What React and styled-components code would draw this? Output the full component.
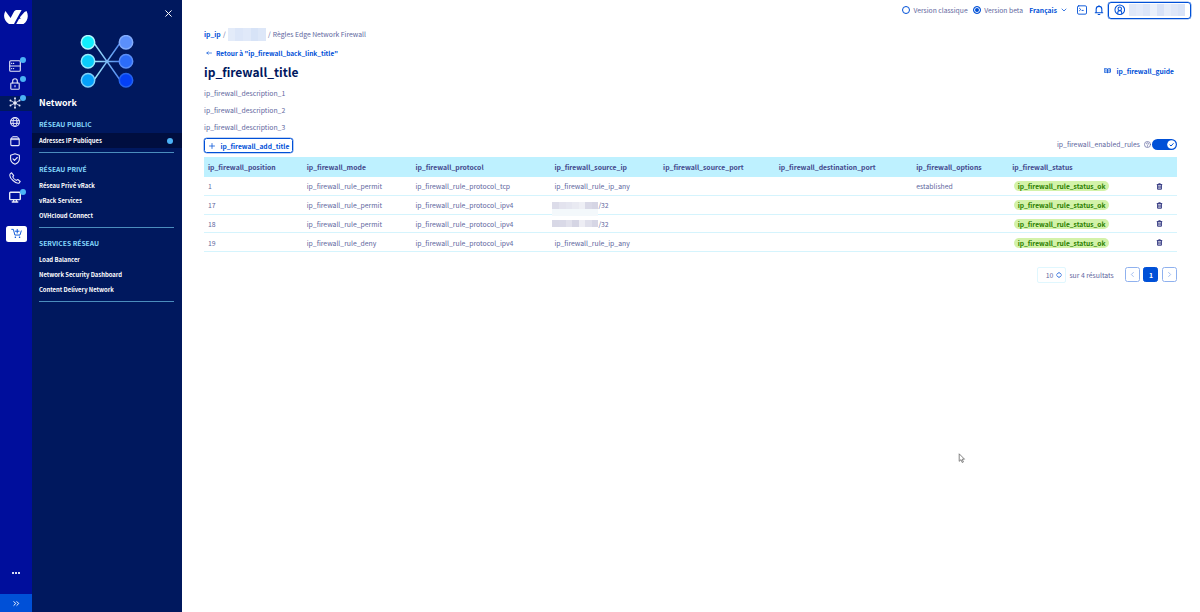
import React from 'react'
import styled, { createGlobalStyle } from 'styled-components'

const GlobalStyle = createGlobalStyle`
  * {
    box-sizing: border-box;
  }

  body {
    margin: 0;
    background: #fff;
    color: #5e669e;
    font-family: 'Noto Sans CJK JP', 'Noto Sans', sans-serif;
    font-size: 6.85px;
    line-height: 10px;
    overflow: hidden;
  }

  h1,
  h2,
  h3,
  p {
    margin: 0;
  }

  svg {
    display: block;
    flex: none;
  }
`

const Page = styled.div`
  display: flex;
  height: 612px;
  width: 1200px;
`

/* icon rail */
const Rail = styled.nav`
  display: flex;
  flex-direction: column;
  align-items: center;
  width: 32px;
  background: #000e9c;
`

const Logo = styled.div`
  height: 58px;
  padding-top: 9px;
`

const RailItem = styled.div`
  position: relative;
  display: flex;
  align-items: center;
  justify-content: center;
  width: 32px;
  height: 15px;
  margin-bottom: 3.8px;
  padding-right: 2px;
  color: #e8eaf8;
  background: ${(p) => (p.$active ? '#00185e' : 'transparent')};
`

const Badge = styled.span`
  position: absolute;
  top: -1px;
  left: 19.5px;
  width: 6px;
  height: 6px;
  border-radius: 50%;
  background: #4bb2f6;
`

const Cart = styled.div`
  display: flex;
  align-items: center;
  justify-content: center;
  width: 21px;
  height: 16px;
  margin-top: 17.6px;
  border-radius: 2.5px;
  background: #fff;
  color: #0050d7;
`

const More = styled.div`
  display: flex;
  gap: 1px;
  margin-top: auto;
  padding-bottom: 20px;

  i {
    width: 2px;
    height: 2px;
    background: #d9dcf3;
  }
`

const Expand = styled.div`
  display: flex;
  align-items: center;
  justify-content: center;
  width: 32px;
  height: 18px;
  background: #0050d7;
  color: #fff;
`

/* network menu */
const Panel = styled.aside`
  width: 150px;
  background: #00185e;
  color: #fff;
  font-size: 5.87px;
  font-weight: bold;
`

const Close = styled.div`
  display: flex;
  justify-content: flex-end;
  height: 35px;
  padding: 9.5px 10px 0 0;
`

const Drawing = styled.div`
  padding-left: 48px;
  height: 61px;
`

const PanelTitle = styled.h2`
  padding: 0 7px;
  font-size: 8.9px;
  line-height: 14px;
`

const Group = styled.section`
  padding-top: ${(p) => p.$top}px;
`

const GroupTitle = styled.h3`
  padding: 0 7px;
  color: #85d9fd;
  font-size: 6.75px;
  line-height: 10px;
  margin-bottom: ${(p) => p.$gap}px;
`

const Entry = styled.div`
  display: flex;
  align-items: center;
  justify-content: space-between;
  height: 15px;
  padding: 0 9.5px 0 7px;
  background: ${(p) => (p.$active ? '#000e3f' : 'transparent')};
`

const Dot = styled.span`
  width: 6px;
  height: 6px;
  border-radius: 50%;
  background: #4bb2f6;
`

const Line = styled.div`
  height: 1px;
  margin: 4px 8px 0 7px;
  background: #4b8dbd;
`

/* content */
const Main = styled.main`
  flex: 1;
  min-width: 0;
`

const TopBar = styled.header`
  display: flex;
  align-items: center;
  justify-content: flex-end;
  height: 20px;
  padding-right: 9.5px;
  font-size: 6.75px;
`

const Radio = styled.span`
  width: 8px;
  height: 8px;
  margin-right: 3px;
  border: 1px solid #0050d7;
  border-radius: 50%;
  background: ${(p) => (p.$on ? '#0050d7' : '#fff')};
  box-shadow: ${(p) => (p.$on ? 'inset 0 0 0 1px #fff' : 'none')};
`

const RadioLabel = styled.span`
  margin-right: ${(p) => p.$gap || 5.5}px;
`

const Lang = styled.div`
  display: flex;
  align-items: center;
  gap: 4px;
  margin-right: 10px;
  color: #0050d7;
  font-weight: bold;
`

const Tools = styled.div`
  display: flex;
  gap: 7px;
  margin-right: 3.5px;
  color: #0050d7;
`

const Account = styled.div`
  display: flex;
  align-items: center;
  gap: 3.5px;
  width: 83px;
  height: 17px;
  padding-left: 5px;
  border: 1px solid #0050d7;
  border-radius: 3px;
  box-shadow: 0 0 0 0.3px #0050d7;
  color: #0050d7;
`

const Mosaic = styled.span`
  display: inline-flex;
  flex: none;
  width: ${(p) => p.$width}px;
  height: ${(p) => p.$height}px;
  box-shadow: ${(p) => (p.$trail ? '0 7px 0 #f3f8fb' : 'none')};

  i {
    flex: 1;
  }
`

const Body = styled.div`
  padding: 9px 23px 0 22px;
`

const Crumbs = styled.div`
  display: flex;
  align-items: center;
  gap: 2.2px;
  height: 10px;
  font-size: 6.8px;

  b {
    color: #0050d7;
  }
`

const Back = styled.div`
  display: flex;
  align-items: center;
  gap: 4px;
  height: 10px;
  margin-top: 8.5px;
  padding-left: 2px;
  color: #0050d7;
  font-size: 6.5px;
  font-weight: bold;
`

const Heading = styled.div`
  display: flex;
  align-items: center;
  justify-content: space-between;
  height: 20px;
  margin: 4.4px 0 3.1px;
`

const Title = styled.h1`
  color: #00185e;
  font-size: 12px;
  line-height: 20px;
`

const Guide = styled.div`
  display: flex;
  align-items: center;
  gap: 5.5px;
  padding: 0 3px 2px 0;
  color: #0050d7;
  font-size: 6.7px;
  font-weight: bold;
`

const Description = styled.p`
  line-height: 17px;
`

const Actions = styled.div`
  display: flex;
  justify-content: space-between;
  height: 21px;
  padding-top: 2px;
`

const AddButton = styled.div`
  display: flex;
  align-items: center;
  gap: 5.5px;
  width: 89px;
  height: 15.5px;
  padding-left: 4px;
  border: 1px solid #0050d7;
  border-radius: 2.5px;
  box-shadow: 0 0 0 0.3px #0050d7;
  color: #0050d7;
  font-size: 6.68px;
  font-weight: bold;
`

const Enabled = styled.div`
  display: flex;
  align-items: center;
  height: 13px;
`

const Switch = styled.div`
  display: flex;
  align-items: center;
  justify-content: flex-end;
  width: 25px;
  height: 11px;
  margin-left: 1.5px;
  padding-right: 1.5px;
  border-radius: 6px;
  background: #0050d7;
`

const Row = styled.div`
  display: grid;
  grid-template-columns: 98.7px 108.7px 139px 108.7px 115.7px 137.5px 96px 129px 1fr;
  align-items: center;
  height: 18.8px;
  padding: 1px 0 0 4px;
  border-bottom: 1px solid #d5f4fd;
`

const HeadRow = styled(Row)`
  height: 20px;
  padding: 0 0 0.4px 4px;
  border: 0;
  background: #bef1ff;
  color: #444a8d;
  font-weight: bold;
`

const Status = styled.span`
  display: block;
  width: fit-content;
  height: 10px;
  margin-left: 2px;
  padding: 0 3.5px;
  border-radius: 5px;
  background: #d3f2a9;
  color: #2b8000;
  font-size: 6.68px;
  font-weight: bold;
`

const SourceIp = styled.span`
  display: flex;
  align-items: center;
  margin-left: -2px;
`

const TrashCell = styled.span`
  padding-left: 14.5px;
`

const Pager = styled.div`
  display: flex;
  align-items: center;
  justify-content: flex-end;
  height: 16px;
  margin-top: 14.5px;
`

const PageSize = styled.div`
  display: flex;
  align-items: center;
  justify-content: flex-end;
  gap: 3px;
  width: 29px;
  height: 16px;
  margin-right: 3px;
  padding-right: 3px;
  border: 1px solid #e0f7fe;
  border-radius: 2px;
`

const PageButton = styled.div`
  display: flex;
  align-items: center;
  justify-content: center;
  width: 15px;
  height: 15px;
  margin-left: ${(p) => p.$gap || 3.6}px;
  border: 1px solid ${(p) => (p.$current ? '#0050d7' : '#8fb1ee')};
  border-radius: 2.5px;
  background: ${(p) => (p.$current ? '#0050d7' : '#fff')};
  color: ${(p) => (p.$current ? '#fff' : '#8fb1ee')};
  font-weight: bold;
`

const Pointer = styled.div`
  position: absolute;
  left: 958px;
  top: 453px;
`

const Svg = ({ size = 12, sw = 1.1, children, ...rest }) => (
  <svg
    width={size}
    height={size}
    viewBox="0 0 12 12"
    fill="none"
    stroke="currentColor"
    strokeWidth={sw}
    strokeLinecap="round"
    strokeLinejoin="round"
    {...rest}
  >
    {children}
  </svg>
)

const railIcons = [
  {
    badge: true,
    icon: (
      <>
        <rect x="0.7" y="0.7" width="10.6" height="10.6" rx="1" />
        <path d="M0.7 6h10.6M2.6 3.4h.2M4.5 3.4h.2M2.6 8.6h.2M4.5 8.6h.2" />
      </>
    ),
  },
  {
    badge: true,
    icon: (
      <>
        <rect x="1.8" y="5" width="8.4" height="6.3" rx="0.8" />
        <path d="M3.7 5V3a2.3 2.3 0 0 1 4.6 0v2M6 7.6v1.2" />
      </>
    ),
  },
  {
    badge: true,
    active: true,
    icon: (
      <>
        <path d="M6 6V1.4M6 6v4.6M6 6 1.6 3.6M6 6l4.4 2.4M6 6l4.4-2.4M6 6 1.6 8.4" strokeWidth="0.8" />
        <circle cx="6" cy="6" r="1.2" fill="currentColor" />
        <path d="M6 1.2v.1M6 10.7v.1M1.4 3.5h.1M10.5 3.5h.1M1.4 8.5h.1M10.5 8.5h.1" strokeWidth="1.8" />
      </>
    ),
  },
  {
    icon: (
      <>
        <circle cx="6" cy="6" r="4.4" />
        <ellipse cx="6" cy="6" rx="2" ry="4.4" strokeWidth="0.9" />
        <path d="M1.9 4.6h8.2M1.9 7.4h8.2" strokeWidth="0.9" />
      </>
    ),
  },
  {
    icon: (
      <>
        <rect x="1.8" y="3.2" width="8.4" height="7.4" rx="1" />
        <path d="M2.4 3.2 3.6 1.6h4.8l1.2 1.6M2 4.6h8" strokeWidth="0.9" />
      </>
    ),
  },
  {
    icon: (
      <>
        <path d="M6 .8 10.4 2.3v3.5c0 2.5-1.8 4.4-4.4 5.5C3.4 10.2 1.6 8.3 1.6 5.8V2.3z" />
        <path d="m4 5.9 1.5 1.5L8.3 4.5" />
      </>
    ),
  },
  {
    icon: (
      <path d="M2.6.8 1.2 1.9C.3 3.6 2 6.7 4 8.5c2 1.8 4.7 3.2 6.2 2.4l1-1.4-2.4-2-1.4.9C6 8 4.3 6.3 3.7 4.9l1-1.3z" />
    ),
  },
  {
    badge: true,
    icon: (
      <>
        <rect x="0.7" y="1.2" width="10.6" height="7.4" rx="0.8" strokeWidth="1.4" />
        <path d="M4.6 8.8v1.8M7.4 8.8v1.8M3.2 11h5.6" strokeWidth="1.3" />
      </>
    ),
  },
]

const groups = [
  {
    title: 'RÉSEAU PUBLIC',
    items: ['Adresses IP Publiques'],
    active: 0,
    top: 9.4,
    gap: 4,
  },
  {
    title: 'RÉSEAU PRIVÉ',
    items: ['Réseau Privé vRack', 'vRack Services', 'OVHcloud Connect'],
    top: 10.8,
    gap: 4.2,
  },
  {
    title: 'SERVICES RÉSEAU',
    items: [
      'Load Balancer',
      'Network Security Dashboard',
      'Content Delivery Network',
    ],
    top: 10,
    gap: 4,
  },
]

const columns = [
  'ip_firewall_position',
  'ip_firewall_mode',
  'ip_firewall_protocol',
  'ip_firewall_source_ip',
  'ip_firewall_source_port',
  'ip_firewall_destination_port',
  'ip_firewall_options',
  'ip_firewall_status',
]

const rules = [
  { position: 1, mode: 'permit', protocol: 'tcp', options: 'established' },
  {
    position: 17,
    mode: 'permit',
    protocol: 'ipv4',
    masked: ['#dcdce9', '#e3e3ee', '#e5e6f0', '#e9eaf2', '#eeeff5', '#d9d9e7', '#d5d5e4'],
    trail: true,
  },
  {
    position: 18,
    mode: 'permit',
    protocol: 'ipv4',
    masked: ['#d8d8e6', '#d9d9e7', '#e1e1ec', '#d5d5e4', '#ededf4', '#dfdfeb', '#d6d6e5'],
  },
  { position: 19, mode: 'deny', protocol: 'ipv4' },
]

const accountColors = ['#dfe7f8', '#e3eafa', '#dce5f8', '#eaf0fb', '#d8e2f7', '#e6edfa', '#dfe7f8', '#d9e3f7']
const crumbColors = ['#e3ebf9', '#dce6f8', '#e0e9f9', '#d7e3f7', '#dde7f8']

const Masked = ({ colors, width, height, trail }) => (
  <Mosaic $width={width} $height={height} $trail={trail}>
    {colors.map((color, i) => (
      <i key={i} style={{ background: color }} />
    ))}
  </Mosaic>
)

const NetworkDrawing = () => (
  <svg width="54" height="54" viewBox="0 0 54 54">
    <defs>
      <linearGradient id="wire" gradientUnits="userSpaceOnUse" x1="14" y1="0" x2="40" y2="0">
        <stop offset="0" stopColor="#a5ebfc" />
        <stop offset="1" stopColor="#4f86ef" />
      </linearGradient>
    </defs>
    <path
      d="M14 8 40 45M14 45 40 8M14 26.5h26"
      fill="none"
      stroke="url(#wire)"
      strokeWidth="1.4"
    />
    <g strokeWidth="1.5">
      <circle cx="8" cy="7.3" r="6.7" fill="#12effc" stroke="#b5f7fd" />
      <circle cx="8" cy="26.3" r="6.7" fill="#0bcdfa" stroke="#97ecfd" />
      <circle cx="8" cy="45.3" r="6.7" fill="#05a0fb" stroke="#7fd0fb" />
      <circle cx="46" cy="7.3" r="6.7" fill="#5b8ffb" stroke="#83acfb" />
      <circle cx="46" cy="26.3" r="6.7" fill="#2c6cf8" stroke="#5b8ff8" />
      <circle cx="46" cy="45.3" r="6.7" fill="#0440f5" stroke="#2563ee" />
    </g>
  </svg>
)

export default function App() {
  return (
    <>
      <GlobalStyle />
      <Page>
        <Rail>
          <Logo>
            <svg width="24" height="15" viewBox="0 0 24 15" fill="#fff">
              <path d="M1.4 2 6.6 9 9.800 3C10.700 1.500 11.500 1 13 1h4.600L10.200 14.500V15H5C0 12-1.200 6.500 1.400 2z" />
              <path d="M22.500 2c2.500 4.500 1.300 10-3 13h-7.300l2.900-5.300h1.600l-.8-1.500L20.500 3z" />
            </svg>
          </Logo>
          {railIcons.map((item, i) => (
            <RailItem key={i} $active={item.active}>
              <Svg>{item.icon}</Svg>
              {item.badge && <Badge />}
            </RailItem>
          ))}
          <Cart>
            <Svg size={11} sw={1}>
              <path d="M.8 1.5h1.8l1.6 6.2h5.6l1.4-4.5M6.8 1.5v4M4.8 3.5h4" />
              <path d="M4.7 10.2h.1M9.3 10.2h.1" strokeWidth="1.6" />
            </Svg>
          </Cart>
          <More>
            <i />
            <i />
            <i />
          </More>
          <Expand>
            <Svg size={9} sw={1.3}>
              <path d="m2.5 3.5 2.500 2.500-2.500 2.500M6.500 3.500 9 6 6.500 8.500" />
            </Svg>
          </Expand>
        </Rail>

        <Panel>
          <Close>
            <Svg size={7} sw={1.7}>
              <path d="m1.2 1.2 9.6 9.6M10.8 1.2l-9.6 9.6" />
            </Svg>
          </Close>
          <Drawing>
            <NetworkDrawing />
          </Drawing>
          <PanelTitle>Network</PanelTitle>
          {groups.map((group) => (
            <Group key={group.title} $top={group.top}>
              <GroupTitle $gap={group.gap}>{group.title}</GroupTitle>
              {group.items.map((item, i) => (
                <Entry key={item} $active={group.active === i}>
                  {item}
                  {group.active === i && <Dot />}
                </Entry>
              ))}
              <Line />
            </Group>
          ))}
        </Panel>

        <Main>
          <TopBar>
            <Radio />
            <RadioLabel>Version classique</RadioLabel>
            <Radio $on />
            <RadioLabel $gap={6.3}>Version beta</RadioLabel>
            <Lang>
              Français
              <Svg size={6} sw={1.5}>
                <path d="m2 4 4 4 4-4" />
              </Svg>
            </Lang>
            <Tools>
              <Svg size={10}>
                <rect x="0.6" y="1" width="10.8" height="10" rx="1.5" />
                <path d="m3 4 1.5 1.4L3 6.8M6 6.5h1.5" />
              </Svg>
              <Svg size={10} sw={1.3}>
                <path d="M1.5 9.3h9M2.6 9.3V5a3.4 3.4 0 0 1 6.8 0v4.3M5 11.3h2M6 .7v.7" />
              </Svg>
            </Tools>
            <Account>
              <Svg size={11.5}>
                <circle cx="6" cy="6" r="5" />
                <circle cx="6" cy="4.9" r="1.8" />
                <path d="M4 10V8.4c0-.9.7-1.5 2-1.5s2 .6 2 1.5V10" />
              </Svg>
              <Masked colors={accountColors} width={56} height={12} />
            </Account>
          </TopBar>

          <Body>
            <Crumbs>
              <b>ip_ip</b>
              <span>/</span>
              <Masked colors={crumbColors} width={38} height={13} />
              <span>/</span>
              <span>Règles Edge Network Firewall</span>
            </Crumbs>
            <Back>
              <Svg size={6} sw={1.3}>
                <path d="M11 6H1.5M4.5 3.5 1.7 6l2.800 2.500" />
              </Svg>
              Retour à "ip_firewall_back_link_title"
            </Back>
            <Heading>
              <Title>ip_firewall_title</Title>
              <Guide>
                <Svg size={7} sw={1.5}>
                  <path d="M1 3h3.500L6 3.700 7.500 3H11v6H7.500L6 9.700 4.500 9H1zM6 4v5.500M3.400 5v2M8.600 5v2" />
                </Svg>
                ip_firewall_guide
              </Guide>
            </Heading>
            <Description>ip_firewall_description_1</Description>
            <Description>ip_firewall_description_2</Description>
            <Description>ip_firewall_description_3</Description>

            <Actions>
              <AddButton>
                <Svg size={6} sw={1.5}>
                  <path d="M6 1v10M1 6h10" />
                </Svg>
                ip_firewall_add_title
              </AddButton>
              <Enabled>
                ip_firewall_enabled_rules
                <Svg size={7} sw={1.2} style={{ marginLeft: 3.5 }}>
                  <circle cx="6" cy="6" r="5.2" />
                  <path d="M4.3 4.8a1.7 1.7 0 1 1 2.5 1.5c-.6.3-.8.6-.8 1M6 9v.1" />
                </Svg>
                <Switch>
                  <svg width="9" height="9" viewBox="0 0 9 9">
                    <circle cx="4.5" cy="4.5" r="4.3" fill="#fff" />
                    <path d="m2.6 4.7 1.4 1.3 2.5-2.7" fill="none" stroke="#0050d7" />
                  </svg>
                </Switch>
              </Enabled>
            </Actions>

            <HeadRow>
              {columns.map((column) => (
                <span key={column}>{column}</span>
              ))}
            </HeadRow>
            {rules.map((rule) => (
              <Row key={rule.position}>
                <span>{rule.position}</span>
                <span>ip_firewall_rule_{rule.mode}</span>
                <span>ip_firewall_rule_protocol_{rule.protocol}</span>
                {rule.masked ? (
                  <SourceIp>
                    <Masked
                      colors={rule.masked}
                      width={46}
                      height={7}
                      trail={rule.trail}
                    />
                    /32
                  </SourceIp>
                ) : (
                  <span>ip_firewall_rule_ip_any</span>
                )}
                <span />
                <span />
                <span>{rule.options}</span>
                <span>
                  <Status>ip_firewall_rule_status_ok</Status>
                </span>
                <TrashCell>
                  <Svg size={7} sw={1.7} color="#3a3f86">
                    <path d="M2 2.7h8M4.5 2.500V1.300h3v1.200M2.700 3v7.700h6.600V3M4.900 5v3.800M7.100 5v3.800" />
                  </Svg>
                </TrashCell>
              </Row>
            ))}

            <Pager>
              <PageSize>
                10
                <Svg size={6} sw={1.6} color="#0050d7">
                  <path d="M1.5 4.5 6 1l4.500 3.500M1.500 7.500 6 11l4.500-3.500" />
                </Svg>
              </PageSize>
              <span>sur 4 résultats</span>
              <PageButton $gap={11}>
                <Svg size={7} sw={1.4}>
                  <path d="M7.5 2.5 4 6l3.5 3.5" />
                </Svg>
              </PageButton>
              <PageButton $current>1</PageButton>
              <PageButton>
                <Svg size={7} sw={1.4}>
                  <path d="M4.5 2.5 8 6 4.5 9.5" />
                </Svg>
              </PageButton>
            </Pager>
          </Body>
        </Main>
      </Page>
      <Pointer>
        <svg width="8" height="11" viewBox="0 0 8 11" fill="#fff" stroke="#666" strokeWidth="0.8">
          <path d="M1.2.8v7.5L3 6.7l1.2 2.8 1.2-.5L4.2 6.2h2.3z" />
        </svg>
      </Pointer>
    </>
  )
}
